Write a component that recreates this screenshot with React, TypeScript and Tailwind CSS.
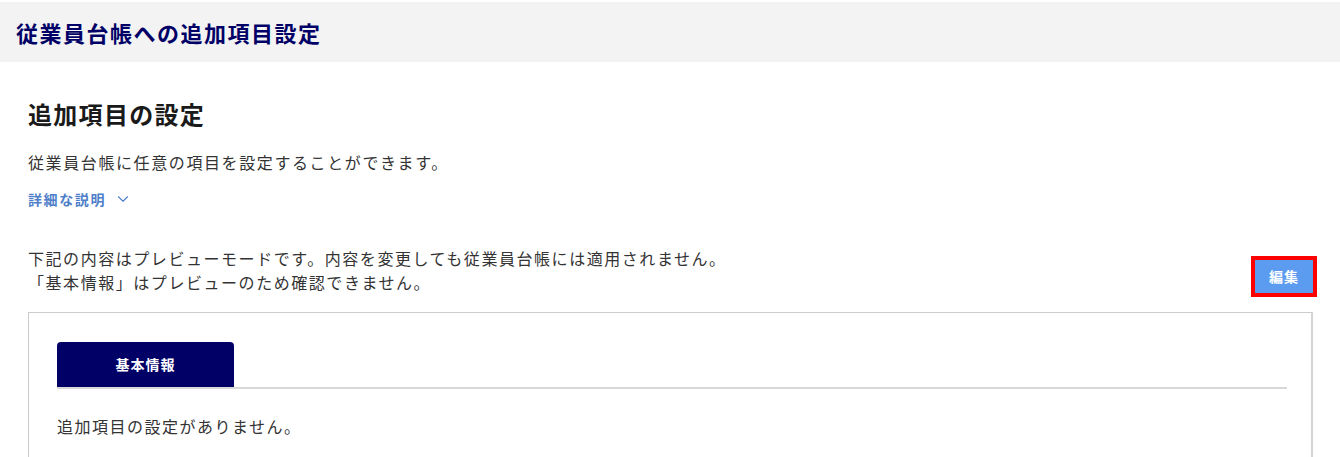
import { ChevronDown } from "lucide-react";

const font = { fontFamily: '"Noto Sans CJK JP", "Noto Sans", sans-serif' };

export default function App() {
  return (
    <div className="w-[1340px] min-h-[457px] bg-white text-[#333333]" style={font}>
      {/* Header */}
      <div className="mt-[2px] h-[60px] bg-[#f3f3f3] flex items-center px-4">
        <h1 className="text-[22px] leading-none font-bold text-[#000066] tracking-[1.5px]">
          従業員台帳への追加項目設定
        </h1>
      </div>

      <div className="pl-[28px] pr-[27px] pb-10">
        {/* Title */}
        <h2 className="mt-[36px] text-[24px] leading-[32px] font-bold text-[#1a1a1a] tracking-[1.3px]">
          追加項目の設定
        </h2>

        <p className="mt-[20px] text-[16px] leading-[24px] tracking-[1.6px]">
          従業員台帳に任意の項目を設定することができます。
        </p>

        <button className="mt-[15px] flex items-center h-[20px] text-[14px] leading-[20px] font-bold text-[#4f7fc9] tracking-[1.6px]">
          詳細な説明
          <ChevronDown size={18} strokeWidth={1.5} className="ml-[8px]" />
        </button>

        {/* Preview notice + edit */}
        <div className="mt-[37px] flex items-start justify-between">
          <div className="text-[16px] leading-[24px] tracking-[1.55px]">
            <p>下記の内容はプレビューモードです。内容を変更しても従業員台帳には適用されません。</p>
            <p>「基本情報」はプレビューのため確認できません。</p>
          </div>
          <button className="mt-[14px] w-[58px] h-[33px] bg-[#5b9cf0] text-white text-[14px] font-bold tracking-[1px] outline-4 outline-solid outline-[#ff0000]">
            編集
          </button>
        </div>

        {/* Panel */}
        <div className="mt-[18px] border border-[#cccccc] border-r-2 border-r-[#d4d4d4] pt-[29px] pl-[28px] pr-[24px] pb-10">
          <div className="flex border-b-2 border-[#d8d8d8]">
            <div className="w-[177px] h-[45px] rounded-t-[4px] bg-[#000066] text-white text-[14px] font-bold tracking-[1px] flex items-center justify-center">
              基本情報
            </div>
          </div>
          <p className="mt-[25px] text-[16px] leading-[24px] tracking-[1.5px]">
            追加項目の設定がありません。
          </p>
        </div>
      </div>
    </div>
  );
}
